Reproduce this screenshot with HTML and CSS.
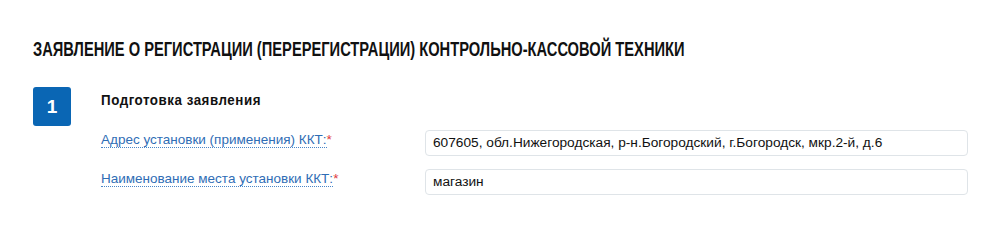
FILE: index.html
```html
<!DOCTYPE html>
<html lang="ru">
<head>
<meta charset="utf-8">
<link rel="stylesheet" href="styles.css">
</head>
<body>
<div class="page">
  <h1 class="title"><span class="title-text">ЗАЯВЛЕНИЕ О РЕГИСТРАЦИИ (ПЕРЕРЕГИСТРАЦИИ) КОНТРОЛЬНО-КАССОВОЙ ТЕХНИКИ</span></h1>
  <div class="step">
    <div class="step-num">1</div>
    <div class="step-body">
      <h2 class="step-title"><span class="step-title-text">Подготовка заявления</span></h2>
      <div class="form">
        <div class="row">
          <label class="label"><span class="hint">Адрес установки (применения) ККТ:</span><span class="req">*</span></label>
          <div class="input">607605, обл.Нижегородская, р-н.Богородский, г.Богородск, мкр.2-й, д.6</div>
        </div>
        <div class="row">
          <label class="label"><span class="hint">Наименование места установки ККТ:</span><span class="req">*</span></label>
          <div class="input">магазин</div>
        </div>
      </div>
    </div>
  </div>
</div>
</body>
</html>
```
FILE: styles.css
```css
html, body {
  margin: 0;
  padding: 0;
  background: #ffffff;
}
.page {
  padding: 37px 32px 0 33px;
  font-family: "Liberation Sans", Arial, sans-serif;
}
.title {
  margin: 0;
  font-family: "Liberation Sans", Arial, sans-serif;
  font-weight: bold;
  font-size: 20px;
  line-height: 24px;
  color: #111111;
  white-space: nowrap;
}
.title-text {
  display: inline-block;
  transform: scaleX(0.734);
  transform-origin: left center;
}
.step {
  display: flex;
  margin-top: 26px;
}
.step-num {
  width: 38px;
  height: 39px;
  flex: none;
  background: #0a66b4;
  border-radius: 3px;
  color: #ffffff;
  font-weight: bold;
  font-size: 19px;
  display: flex;
  align-items: center;
  justify-content: center;
}
.step-body {
  flex: 1;
  margin-left: 30px;
}
.step-title {
  margin: 3px 0 0 0;
  font-family: "Liberation Sans", Arial, sans-serif;
  font-weight: bold;
  font-size: 15px;
  line-height: 19px;
  color: #111111;
  white-space: nowrap;
}
.step-title-text {
  display: inline-block;
  transform: scaleX(0.89);
  transform-origin: left center;
  letter-spacing: 0.6px;
}
.form {
  margin-top: 21px;
  display: flex;
  flex-direction: column;
  gap: 13px;
}
.row {
  display: flex;
  align-items: flex-start;
}
.label {
  width: 324px;
  flex: none;
  margin-top: 2px;
  font-size: 13.5px;
  line-height: 16px;
  color: #2f6db5;
}
.hint {
  border-bottom: 1px dotted #4a86c8;
}
.req {
  color: #e0393e;
}
.input {
  flex: 1;
  height: 24px;
  line-height: 24px;
  border: 1px solid #dfe4e8;
  border-radius: 4px;
  padding: 0 7px;
  font-size: 13.7px;
  color: #111111;
  white-space: nowrap;
  overflow: hidden;
}
```
